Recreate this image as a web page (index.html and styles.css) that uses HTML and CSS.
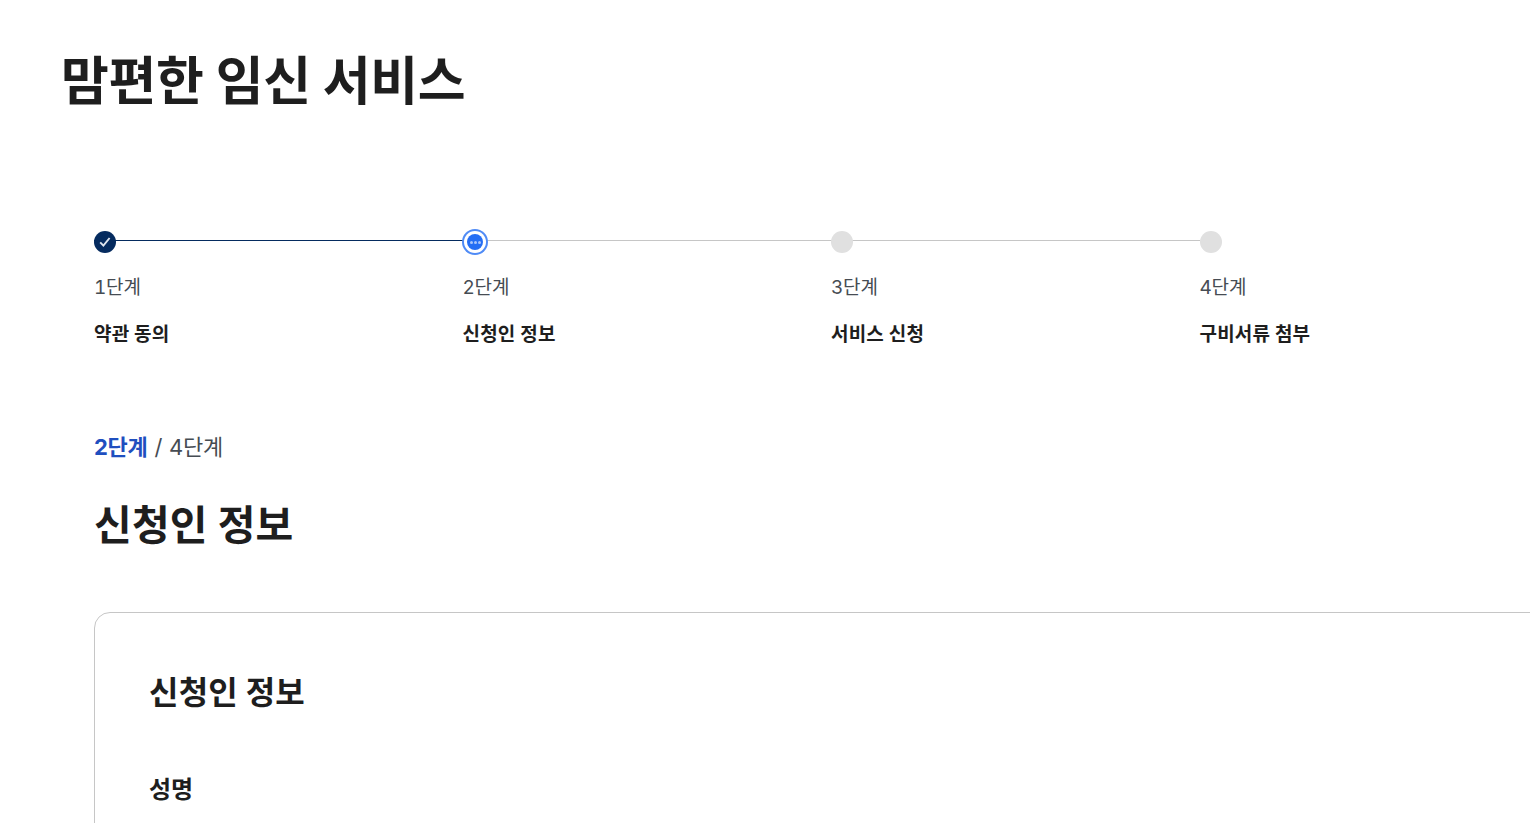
FILE: index.html
```html
<!DOCTYPE html>
<html lang="ko">
  <head>
    <meta charset="UTF-8" />
    <title>맘편한 임신 서비스</title>
    <link rel="stylesheet" href="styles.css">
  </head>
  <body>
    <header class="page-head">
      <h1>맘편한 임신 서비스</h1>
    </header>
    <main class="content">
      <ol class="steps">
        <li class="step done">
          <span class="dot">
            <svg width="14" height="14" viewBox="0 0 14 14"><path d="M2.2 7.4 5.4 10.6 11.6 3" fill="none" stroke="#dfe5ef" stroke-width="1.9"/></svg>
          </span>
          <p class="step-no">1단계</p>
          <p class="step-name">약관 동의</p>
        </li>
        <li class="step current">
          <span class="dot"><i></i><i></i><i></i></span>
          <p class="step-no">2단계</p>
          <p class="step-name">신청인 정보</p>
        </li>
        <li class="step">
          <span class="dot"></span>
          <p class="step-no">3단계</p>
          <p class="step-name">서비스 신청</p>
        </li>
        <li class="step">
          <span class="dot"></span>
          <p class="step-no">4단계</p>
          <p class="step-name">구비서류 첨부</p>
        </li>
      </ol>
      <p class="progress"><strong>2단계</strong><span class="sep">/</span>4단계</p>
      <h2>신청인 정보</h2>
      <section class="card">
        <h3>신청인 정보</h3>
        <p class="label">성명</p>
      </section>
    </main>
  </body>
</html>
```

FILE: styles.css
```css
* {
  box-sizing: border-box;
  margin: 0;
  padding: 0;
}
html, body {
  height: 823px;
  overflow: hidden;
}
body {
  background: #fff;
  color: #1e1e1e;
  font-family: Inter, "Noto Sans CJK KR", sans-serif;
}
.page-head {
  padding: 44px 61px 0;
}
h1 {
  font-size: 52px;
  line-height: 76px;
  font-weight: 700;
  letter-spacing: -0.3px;
}
.content {
  padding: 111px 0 0 94px;
  width: 1568px;
}
/* steps */
.steps {
  display: flex;
  list-style: none;
}
.step {
  position: relative;
  display: flex;
  flex-direction: column;
  width: 368.6px;
}
.step::before {
  content: "";
  position: absolute;
  left: 0;
  right: 0;
  top: 9px;
  height: 1px;
  background: #c6c6c6;
}
.step:last-child::before {
  display: none;
}
.step.done::before {
  background: #052b5f;
}
.dot {
  position: relative;
  display: flex;
  align-items: center;
  justify-content: center;
  gap: 1px;
  width: 22px;
  height: 22px;
  border-radius: 50%;
  background: #e0e0e0;
}
.done .dot {
  background: #052b5f;
}
.current .dot {
  background: #256ef4;
  box-shadow: 0 0 0 3px #fff, 0 0 0 5px #4f8bf6;
  width: 16px;
  height: 16px;
  margin: 3px 0 3px 4.5px;
}
.dot i {
  width: 3px;
  height: 3px;
  border-radius: 50%;
  background: #a9c5fa;
}
.step-no {
  margin-top: 21px;
  font-size: 19px;
  line-height: 28px;
  color: #464c53;
  letter-spacing: -0.2px;
  font-variant-numeric: tabular-nums;
}
.step-name {
  margin-top: 19px;
  font-size: 19px;
  line-height: 28px;
  font-weight: 700;
  letter-spacing: 0.2px;
}
/* heading */
.progress {
  margin-top: 82px;
  font-size: 22px;
  line-height: 32px;
  color: #464c53;
  letter-spacing: -0.3px;
}
.progress strong {
  color: #1f4fbf;
}
.sep {
  margin: 0 7px;
}
h2 {
  margin-top: 32px;
  font-size: 41px;
  line-height: 60px;
  font-weight: 700;
  letter-spacing: 0.2px;
}
.card {
  margin-top: 57px;
  height: 300px;
  border: 1px solid #c6c6c6;
  border-radius: 16px;
  padding: 57px 54px;
}
h3 {
  font-size: 32px;
  line-height: 46px;
  font-weight: 700;
  letter-spacing: 0.2px;
}
.label {
  margin-top: 57px;
  font-size: 24px;
  line-height: 34px;
  font-weight: 700;
}
```
